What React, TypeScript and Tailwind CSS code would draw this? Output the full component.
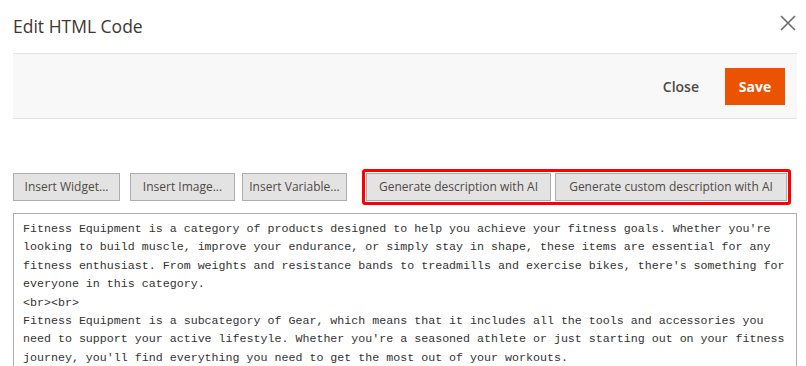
import React from "react";

const text = `Fitness Equipment is a category of products designed to help you achieve your fitness goals. Whether you're
looking to build muscle, improve your endurance, or simply stay in shape, these items are essential for any
fitness enthusiast. From weights and resistance bands to treadmills and exercise bikes, there's something for
everyone in this category.
<br><br>
Fitness Equipment is a subcategory of Gear, which means that it includes all the tools and accessories you
need to support your active lifestyle. Whether you're a seasoned athlete or just starting out on your fitness
journey, you'll find everything you need to get the most out of your workouts.`;

export default function App() {
  const btn =
    "h-[28px] px-[6px] bg-[#e3e3e3] border border-[#adadad] text-[#514943] text-[12px] leading-none whitespace-nowrap";
  return (
    <div
      className="w-[806px] h-[366px] overflow-hidden bg-white relative"
      style={{ fontFamily: "'Open Sans', sans-serif" }}
    >
      <div className="flex items-start justify-between pl-[13px] pr-[10px] pt-[14px] h-[53px]">
        <h1 className="text-[17.5px] text-[#41362f] leading-[24px] font-normal">Edit HTML Code</h1>
        <svg width="16" height="16" viewBox="0 0 16 16" className="mt-[1px]">
          <path d="M1 1 L15 15 M15 1 L1 15" stroke="#6b6b6b" strokeWidth="1.6" />
        </svg>
      </div>
      <div className="ml-[13px] mr-[9px] h-[66px] bg-[#f8f8f8] border-t border-b border-[#e3e3e3] flex items-center justify-end pr-[12px]">
        <button className="text-[14px] font-semibold text-[#514943] px-[13px] mr-[13px]">Close</button>
        <button className="w-[60px] h-[37px] bg-[#eb5202] text-white text-[14px] font-bold">Save</button>
      </div>
      <div className="flex items-center ml-[13px] mt-[50px]">
        <button className={`${btn} w-[107px]`}>Insert Widget...</button>
        <button className={`${btn} w-[105px] ml-[10px]`}>Insert Image...</button>
        <button className={`${btn} w-[105px] ml-[7px]`}>Insert Variable...</button>
        <div className="ml-[15px] border-[3px] border-[#ff0000] rounded-[3px] p-[1px] flex gap-[4px]">
          <button className={`${btn} w-[185px]`}>Generate description with AI</button>
          <button className={`${btn} w-[232px]`}>Generate custom description with AI</button>
        </div>
      </div>
      <div className="ml-[13px] mr-[9px] mt-[8px] border border-[#adadad] h-[200px] pl-[9px] pt-[6px]">
        <pre
          className="text-[11.65px] leading-[18.4px] text-[#333333]"
          style={{ fontFamily: "'Liberation Mono', 'Courier New', monospace" }}
        >
          {text}
        </pre>
      </div>
    </div>
  );
}
